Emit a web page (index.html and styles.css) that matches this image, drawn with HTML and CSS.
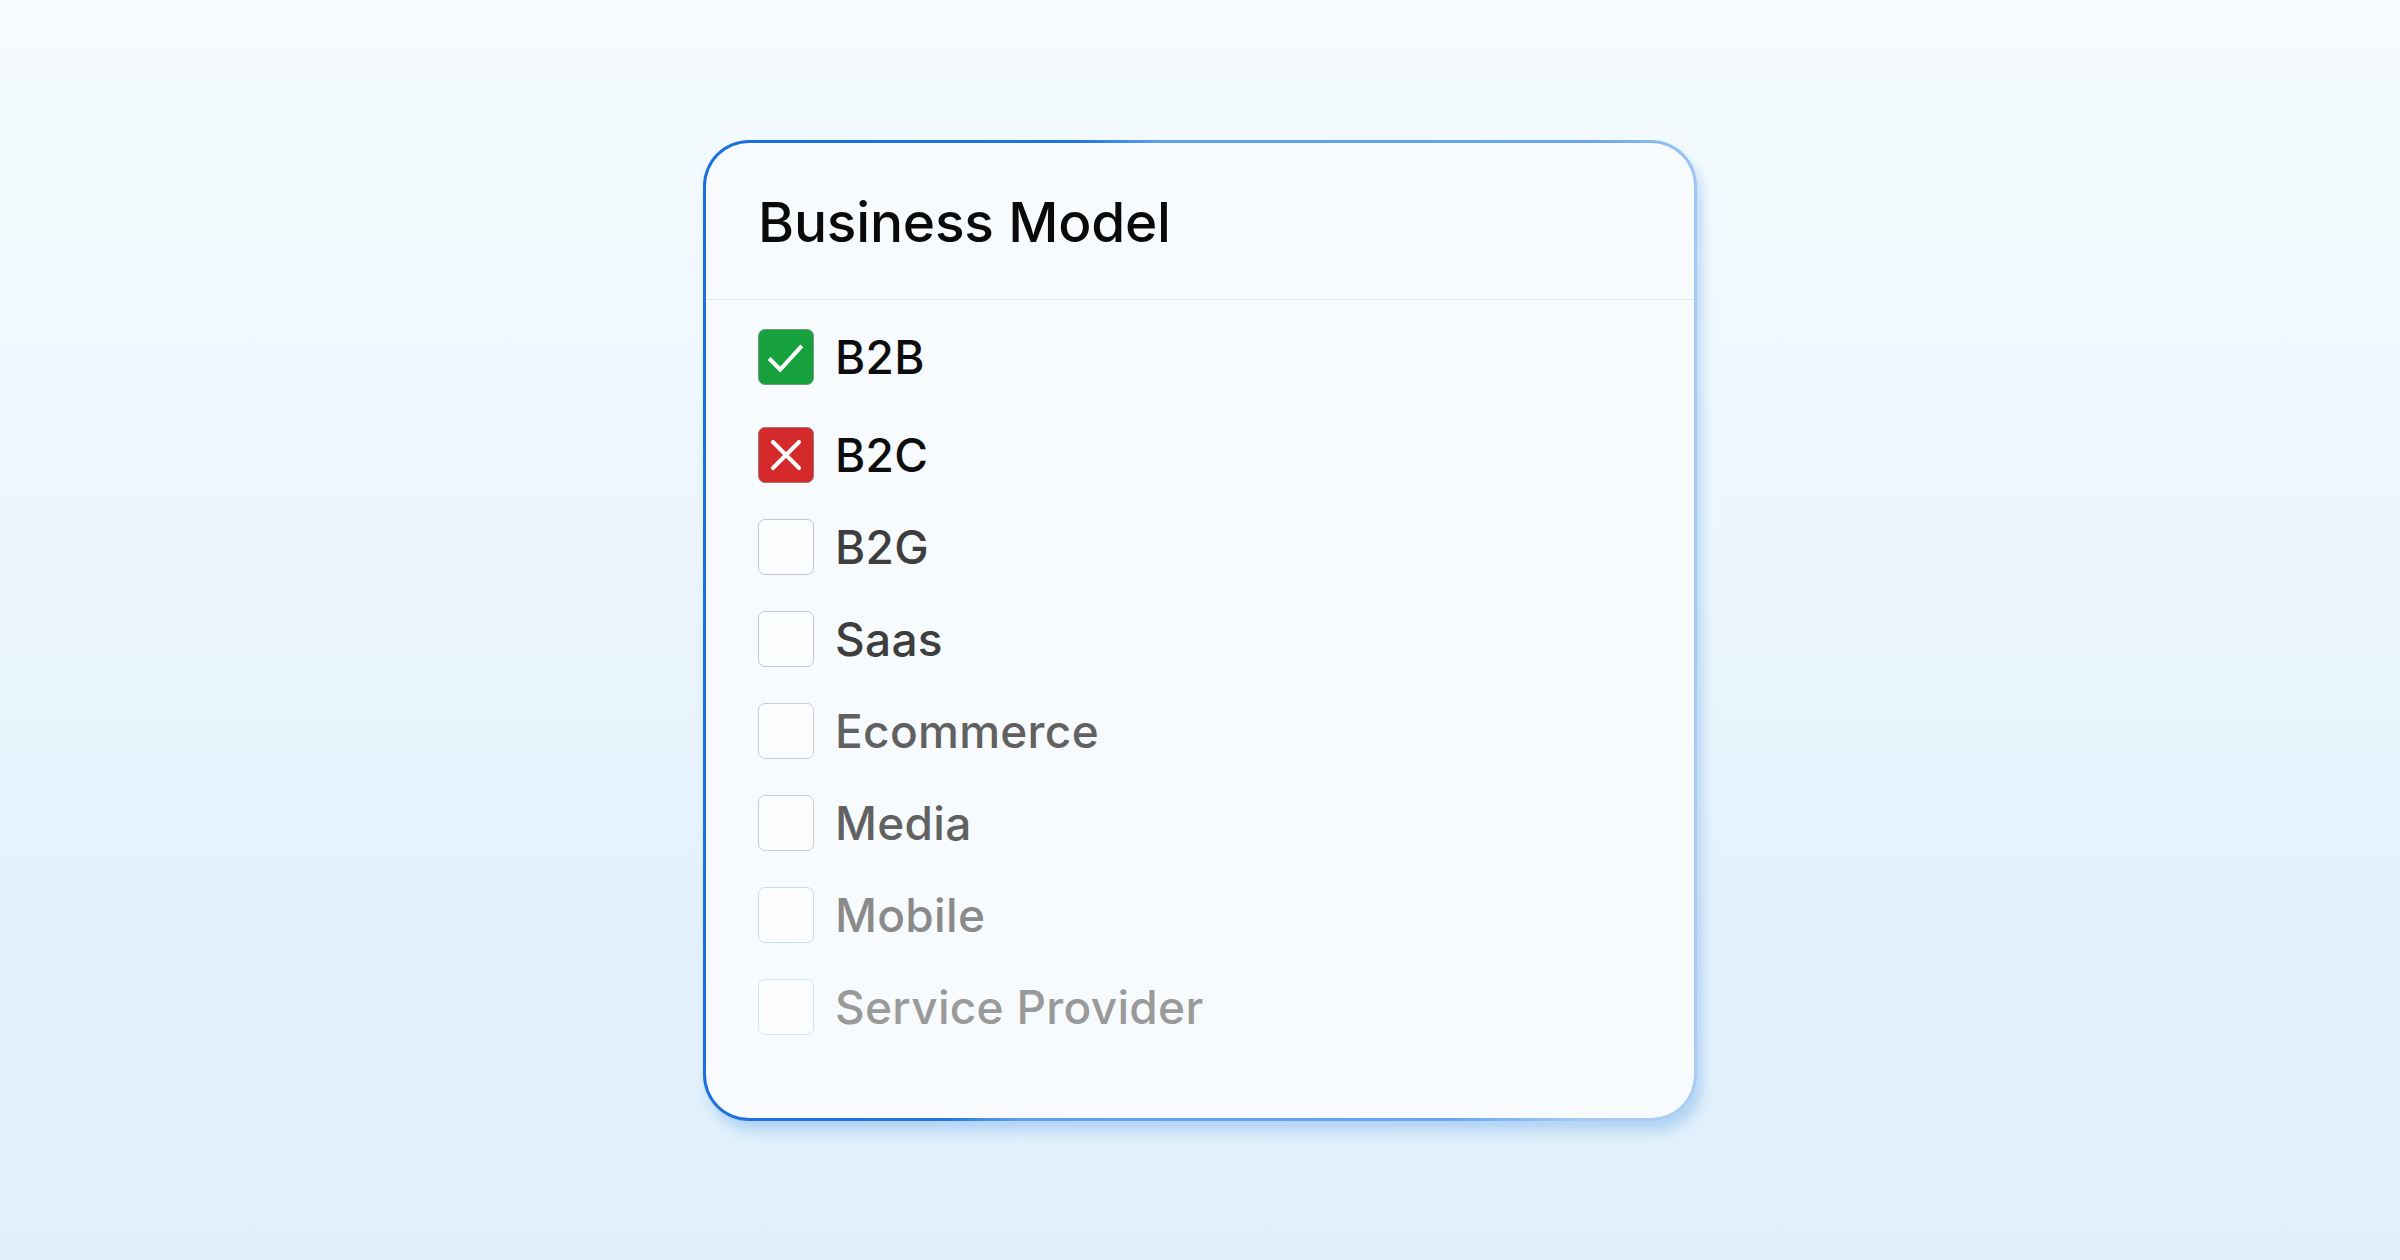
FILE: index.html
```html
<!DOCTYPE html>
<html lang="en">
<head>
<meta charset="utf-8">
<title>Business Model</title>
<link rel="stylesheet" href="styles.css">
</head>
<body>
  <main class="stage">
    <section class="filter-card">
      <header class="filter-head">
        <h2 class="filter-title">Business Model</h2>
      </header>
      <ul class="option-list">
        <li class="option option--first">
          <span class="box box--yes">
            <svg viewBox="0 0 56 56" class="mark"><path d="M12 31 L22 41 L43 18" fill="none" stroke="#fff" stroke-width="4.2" stroke-linecap="square" stroke-linejoin="miter"/></svg>
          </span>
          <span class="label tone-1">B2B</span>
        </li>
        <li class="option">
          <span class="box box--no">
            <svg viewBox="0 0 56 56" class="mark"><path d="M14.5 14.5 L41.5 41.5 M41.5 14.5 L14.5 41.5" fill="none" stroke="#fff" stroke-width="4.2" stroke-linecap="round"/></svg>
          </span>
          <span class="label tone-1">B2C</span>
        </li>
        <li class="option">
          <span class="box box--empty edge-2"></span>
          <span class="label tone-2">B2G</span>
        </li>
        <li class="option">
          <span class="box box--empty edge-2"></span>
          <span class="label tone-2">Saas</span>
        </li>
        <li class="option">
          <span class="box box--empty edge-3"></span>
          <span class="label tone-3">Ecommerce</span>
        </li>
        <li class="option">
          <span class="box box--empty edge-3"></span>
          <span class="label tone-3">Media</span>
        </li>
        <li class="option">
          <span class="box box--empty edge-4"></span>
          <span class="label tone-4">Mobile</span>
        </li>
        <li class="option">
          <span class="box box--empty edge-5"></span>
          <span class="label tone-5">Service Provider</span>
        </li>
      </ul>
    </section>
  </main>
</body>
</html>
```

FILE: styles.css
```css
* {
  box-sizing: border-box;
}

html,
body {
  margin: 0;
  padding: 0;
}

body {
  font-family: Inter, "Noto Sans", "Liberation Sans", sans-serif;
  background: linear-gradient(180deg, #f5fbfe 0%, #eef8fd 35%, #e5f2fc 70%, #dfeffb 100%);
  min-height: 100vh;
}

.stage {
  min-height: 100vh;
  display: grid;
  place-items: center;
}

/* card with a blue gradient outline, dark at the left, pale at the right */
.filter-card {
  width: 994px;
  border: 3px solid transparent;
  border-radius: 46px;
  background:
    linear-gradient(#f7fbfe, #f7fbfe) padding-box,
    linear-gradient(98deg, #1a6fdd 0%, #1f74e0 33%, #5e9eeb 40%, #69a6ee 78%, #a5cbf3 90%, #a8cdf4 100%) border-box;
  box-shadow: 5px 10px 12px rgba(110, 170, 235, 0.4);
}

.filter-head {
  padding: 46px 52px 44px;
  border-bottom: 1px solid #dbe9f6;
}

.filter-title {
  margin: 0;
  font-size: 55px;
  line-height: 66px;
  font-weight: 500;
  color: #0a0a0a;
  letter-spacing: -0.2px;
}

.option-list {
  list-style: none;
  margin: 0;
  padding: 29px 52px 83px;
  display: flex;
  flex-direction: column;
  gap: 36px;
}

.option {
  display: flex;
  align-items: center;
  gap: 21px;
  height: 56px;
}

.option--first {
  margin-bottom: 6px;
}

.box {
  flex: none;
  width: 56px;
  height: 56px;
  border-radius: 7px;
  display: flex;
  align-items: center;
  justify-content: center;
}

.mark {
  width: 56px;
  height: 56px;
  display: block;
}

.box--yes {
  background: #16a13c;
  border: 1px solid #6f9a7c;
}

.box--no {
  background: #d42a2b;
  border: 1px solid #a27579;
}

.box--empty {
  background: #fbfdff;
  border: 1.5px solid #c4c9d0;
}

.edge-2 { border-color: #c2c7cf; }
.edge-3 { border-color: #c8cdd4; }
.edge-4 { border-color: #c9dbea; }
.edge-5 { border-color: #d2e5f5; }

.label {
  font-size: 46px;
  line-height: 56px;
  font-weight: 500;
  white-space: nowrap;
  letter-spacing: 0.3px;
}

.tone-1 { color: #0d0d0d; }
.tone-2 { color: #3e3e3e; }
.tone-3 { color: #616161; }
.tone-4 { color: #8a8a8a; }
.tone-5 { color: #9a9a9a; }
```
